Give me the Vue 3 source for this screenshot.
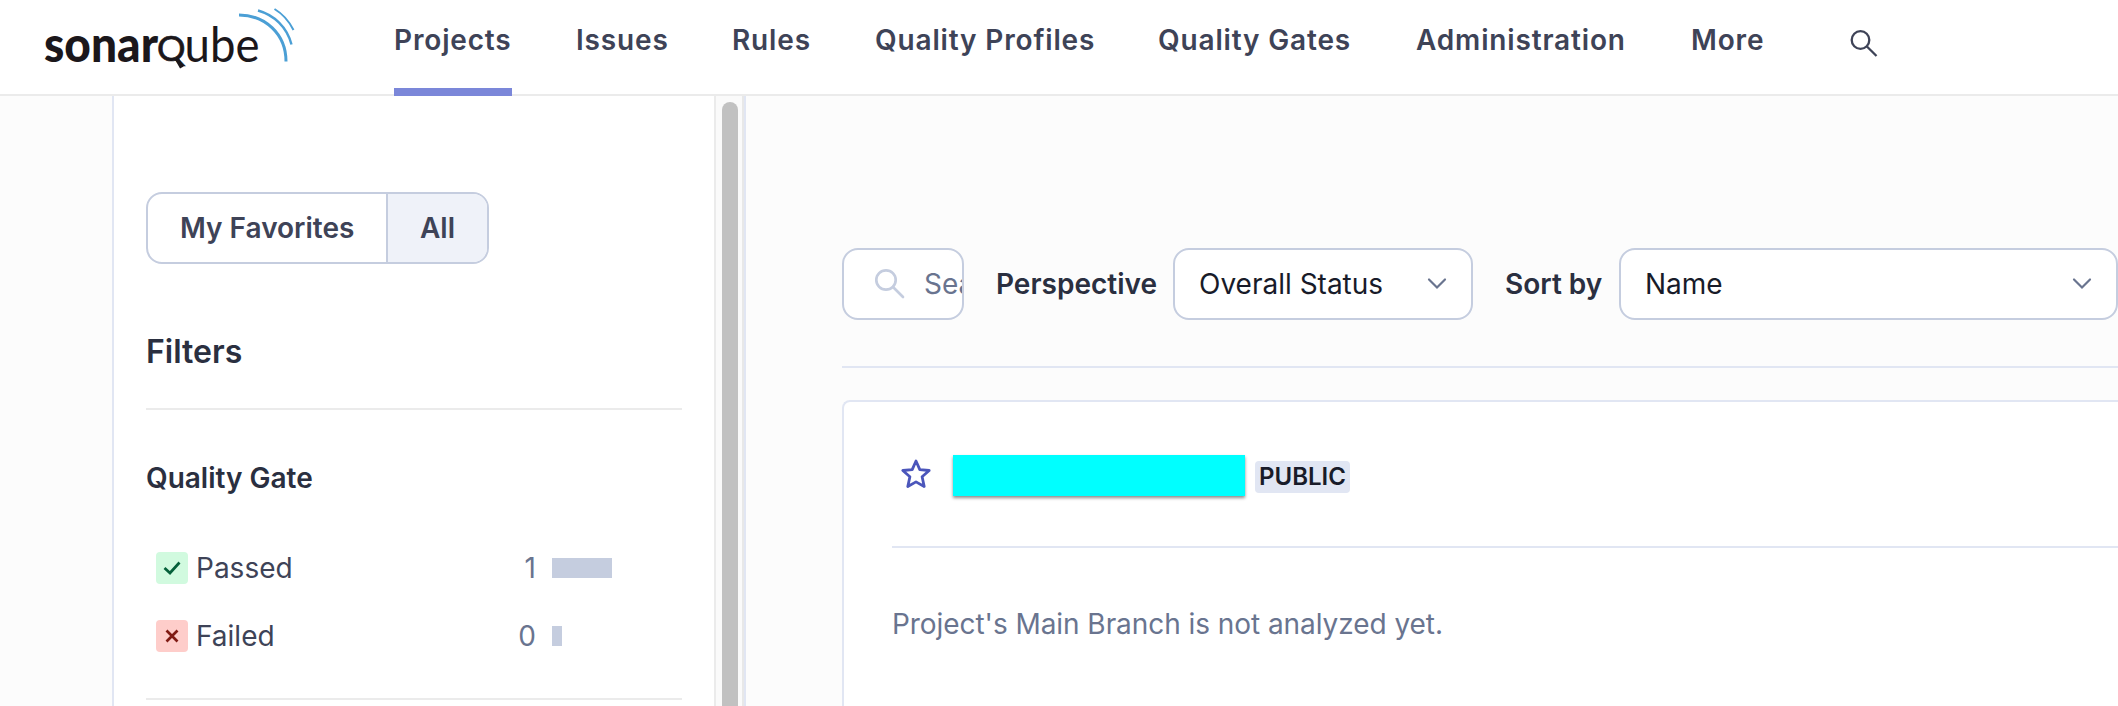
<script setup>
const navItems = [
  { label: 'Projects', width: 118, active: true },
  { label: 'Issues', width: 92 },
  { label: 'Rules', width: 79 },
  { label: 'Quality Profiles', width: 219 },
  { label: 'Quality Gates', width: 194 },
  { label: 'Administration', width: 211 },
  { label: 'More', width: 73 },
]

const gates = [
  { label: 'Passed', count: 1, bar: 60, kind: 'ok' },
  { label: 'Failed', count: 0, bar: 10, kind: 'bad' },
]
</script>

<template>
  <div class="page">
    <header class="header">
      <svg class="logo" width="260" height="80" viewBox="40 0 260 80">
        <g fill="#1b171b" font-family="Lato, sans-serif">
          <text x="44" y="61.500" font-size="49.500" font-weight="900" textLength="114" lengthAdjust="spacingAndGlyphs">sonar</text>
          <text x="157" y="61.300" font-size="35" textLength="28.500" lengthAdjust="spacingAndGlyphs" stroke="#1b171b" stroke-width="0.700">Q</text>
          <text x="184.500" y="61.500" font-size="49" textLength="75" lengthAdjust="spacingAndGlyphs">ube</text>
        </g>
        <path d="M177 59L181.800 67.500" fill="none" stroke="#1b171b" stroke-width="4" />
        <g fill="none" stroke="#4b9fd5">
          <path d="M239 15C265 15 286 34 286 61.500" stroke-width="3" />
          <path d="M258 10.500C274 15 287 27 291.500 44.500" stroke-width="2.400" />
          <path d="M274.500 9C282 13.500 289 21 293.500 30" stroke-width="2" />
        </g>
      </svg>
      <nav class="nav">
        <a v-for="item in navItems" :key="item.label" class="nav-item" :class="{ active: item.active }" :style="{ width: item.width + 'px' }">{{ item.label }}</a>
      </nav>
      <svg class="nav-search" width="30" height="30" viewBox="0 0 30 30" fill="none" stroke="#3e4357" stroke-width="2.300">
        <circle cx="10.500" cy="11" r="8.800" />
        <path d="M16.700 17.200L26.500 27" />
      </svg>
    </header>

    <div class="body">
      <aside class="sidebar">
        <div class="toggle">
          <span class="toggle-item fav">My Favorites</span>
          <span class="toggle-item all">All</span>
        </div>
        <h2 class="filters">Filters</h2>
        <section class="facet">
          <h3 class="facet-title">Quality Gate</h3>
          <div v-for="g in gates" :key="g.label" class="gate">
            <span class="gate-icon" :class="g.kind">
              <svg width="32" height="32" viewBox="0 0 32 32" fill="none" stroke-width="2.700">
                <path v-if="g.kind === 'ok'" d="M8.500 16L14 21L23.500 10.500" />
                <path v-else d="M10.500 10.500L21.500 21.500M21.500 10.500L10.500 21.500" />
              </svg>
            </span>
            <span class="gate-label">{{ g.label }}</span>
            <span class="gate-count">{{ g.count }}</span>
            <span class="gate-bar" :style="{ width: g.bar + 'px' }"></span>
          </div>
        </section>
      </aside>
      <div class="scroll"><div class="thumb"></div></div>

      <main class="main">
        <div class="toolbar">
          <div class="search">
            <svg width="32" height="32" viewBox="0 0 32 32" fill="none" stroke="#c5cddf" stroke-width="2.700" stroke-linecap="round">
              <circle cx="12" cy="12" r="9.700" />
              <path d="M19 19L29 29" />
            </svg>
            <span class="placeholder">Search</span>
          </div>
          <span class="label perspective">Perspective</span>
          <div class="select status">
            <span>Overall Status</span>
            <svg width="20" height="14" viewBox="0 0 20 14" fill="none" stroke="#69748f" stroke-width="2.200" stroke-linecap="round"><path d="M2 2.500L10 10.500L18 2.500" /></svg>
          </div>
          <span class="label sort">Sort by</span>
          <div class="select name">
            <span>Name</span>
            <svg width="20" height="14" viewBox="0 0 20 14" fill="none" stroke="#69748f" stroke-width="2.200" stroke-linecap="round"><path d="M2 2.500L10 10.500L18 2.500" /></svg>
          </div>
        </div>

        <article class="card">
          <div class="card-head">
            <svg class="star" width="34" height="34" viewBox="0 0 34 34" fill="none" stroke="#4b56bb" stroke-width="2.800" stroke-linejoin="round">
              <path d="M17 4L20.800 12.600L30.200 13.500L23.100 19.700L25.200 29.500L17 24.900L8.800 29.500L10.900 19.700L3.800 13.500L13.200 12.600Z" />
            </svg>
            <div class="mask"></div>
            <span class="badge">PUBLIC</span>
          </div>
          <p class="message">Project's Main Branch is not analyzed yet.</p>
        </article>
      </main>
    </div>
  </div>
</template>

<style>
body {
  margin: 0;
  overflow: hidden;
}
</style>

<style scoped>
* {
  box-sizing: border-box;
}
.page {
  width: 2118px;
  height: 706px;
  overflow: hidden;
  background: #fcfcfc;
  font-family: Inter, sans-serif;
  font-size: 28px;
  line-height: 40px;
  color: #3e4357;
}
.header {
  display: flex;
  height: 96px;
  padding-left: 40px;
  background: #fff;
  border-bottom: 2px solid #ebebeb;
}
.logo {
  flex: none;
}
.nav {
  display: flex;
  gap: 64px;
  margin-left: 94px;
}
.nav-item {
  height: 96px;
  padding-top: 20px;
  font-weight: 600;
  letter-spacing: 0.84px;
  white-space: nowrap;
}
.nav-item.active {
  border-bottom: 8px solid #7b87d9;
}
.nav-search {
  margin: 29px 0 0 86px;
}
.body {
  display: flex;
  height: 610px;
  padding-left: 112px;
}
.sidebar {
  flex: none;
  width: 604px;
  padding: 96px 32px 0;
  background: #fff;
  border-left: 2px solid #e1e6f3;
  border-right: 2px solid #ebebeb;
}
.toggle {
  display: flex;
  width: 343px;
  height: 72px;
  overflow: hidden;
  border: 2px solid #c5cddf;
  border-radius: 16px;
  font-weight: 600;
  line-height: 68px;
}
.toggle-item {
  white-space: nowrap;
}
.fav {
  width: 240px;
  padding-left: 32px;
  border-right: 2px solid #c5cddf;
}
.all {
  flex: 1;
  padding-left: 32px;
  background: #eff2f9;
}
.filters {
  height: 82px;
  margin: 64px 0 0;
  border-bottom: 2px solid #ebebeb;
  font-size: 32px;
  font-weight: 600;
  line-height: 48px;
  color: #2a2f40;
}
.facet {
  height: 290px;
  padding-top: 48px;
  border-bottom: 2px solid #ebebeb;
}
.facet-title {
  margin: 0 0 36px;
  font-size: 28px;
  font-weight: 600;
  line-height: 40px;
  color: #2a2f40;
}
.gate {
  display: flex;
  align-items: center;
  height: 68px;
  padding-left: 10px;
}
.gate-icon {
  width: 32px;
  height: 32px;
  border-radius: 4px;
}
.gate-icon svg {
  display: block;
}
.ok {
  background: #d1fadf;
  stroke: #05603a;
}
.bad {
  background: #fecdca;
  stroke: #801b14;
}
.gate-label {
  width: 200px;
  margin-left: 8px;
}
.gate-count {
  width: 140px;
  text-align: right;
  color: #69748f;
}
.gate-bar {
  height: 20px;
  margin-left: 16px;
  background: #c5cddf;
}
.scroll {
  flex: none;
  width: 30px;
  padding: 6px 0 0 6px;
  background: #fafafa;
  border-right: 2px solid #e1e6f3;
  box-shadow: inset -2px 0 #e8e8e8;
}
.thumb {
  width: 16px;
  height: 700px;
  border-radius: 8px;
  background: #c1c1c1;
}
.main {
  flex: none;
  width: 1372px;
  padding: 152px 0 0 96px;
}
.toolbar {
  display: flex;
  align-items: center;
  height: 120px;
  padding-bottom: 46px;
  border-bottom: 2px solid #e1e6f3;
}
.search {
  display: flex;
  align-items: center;
  width: 122px;
  height: 72px;
  padding-left: 30px;
  overflow: hidden;
  background: #fff;
  border: 2px solid #c5cddf;
  border-radius: 16px;
  color: #69748f;
}
.search svg {
  flex: none;
}
.placeholder {
  margin-left: 18px;
}
.label {
  font-weight: 600;
  color: #2a2f40;
  white-space: nowrap;
}
.perspective {
  width: 177px;
  margin-left: 32px;
}
.select {
  display: flex;
  align-items: center;
  justify-content: space-between;
  height: 72px;
  padding: 0 24px;
  background: #fff;
  border: 2px solid #c5cddf;
  border-radius: 16px;
  color: #181b29;
}
.status {
  width: 300px;
}
.sort {
  width: 114px;
  margin-left: 32px;
}
.name {
  width: 499px;
}
.card {
  height: 400px;
  margin-top: 32px;
  padding-left: 48px;
  background: #fff;
  border: 2px solid #e1e6f3;
  border-right: 0;
  border-radius: 8px 0 0 0;
}
.card-head {
  display: flex;
  align-items: flex-start;
  height: 146px;
  padding: 53px 0 0 7px;
  border-bottom: 2px solid #e1e6f3;
}
.star {
  margin-top: 2px;
}
.mask {
  width: 292px;
  height: 41px;
  margin-left: 20px;
  background: #00ffff;
  box-shadow: 0 2px 3px rgba(0, 0, 0, 0.45);
}
.badge {
  width: 95px;
  height: 32px;
  margin: 6px 0 0 10px;
  border-radius: 4px;
  background: #e1e6f3;
  color: #181b29;
  font-size: 24px;
  font-weight: 600;
  line-height: 32px;
  text-align: center;
}
.message {
  margin: 56px 0 0;
  letter-spacing: -0.06px;
  color: #69748f;
}
</style>
